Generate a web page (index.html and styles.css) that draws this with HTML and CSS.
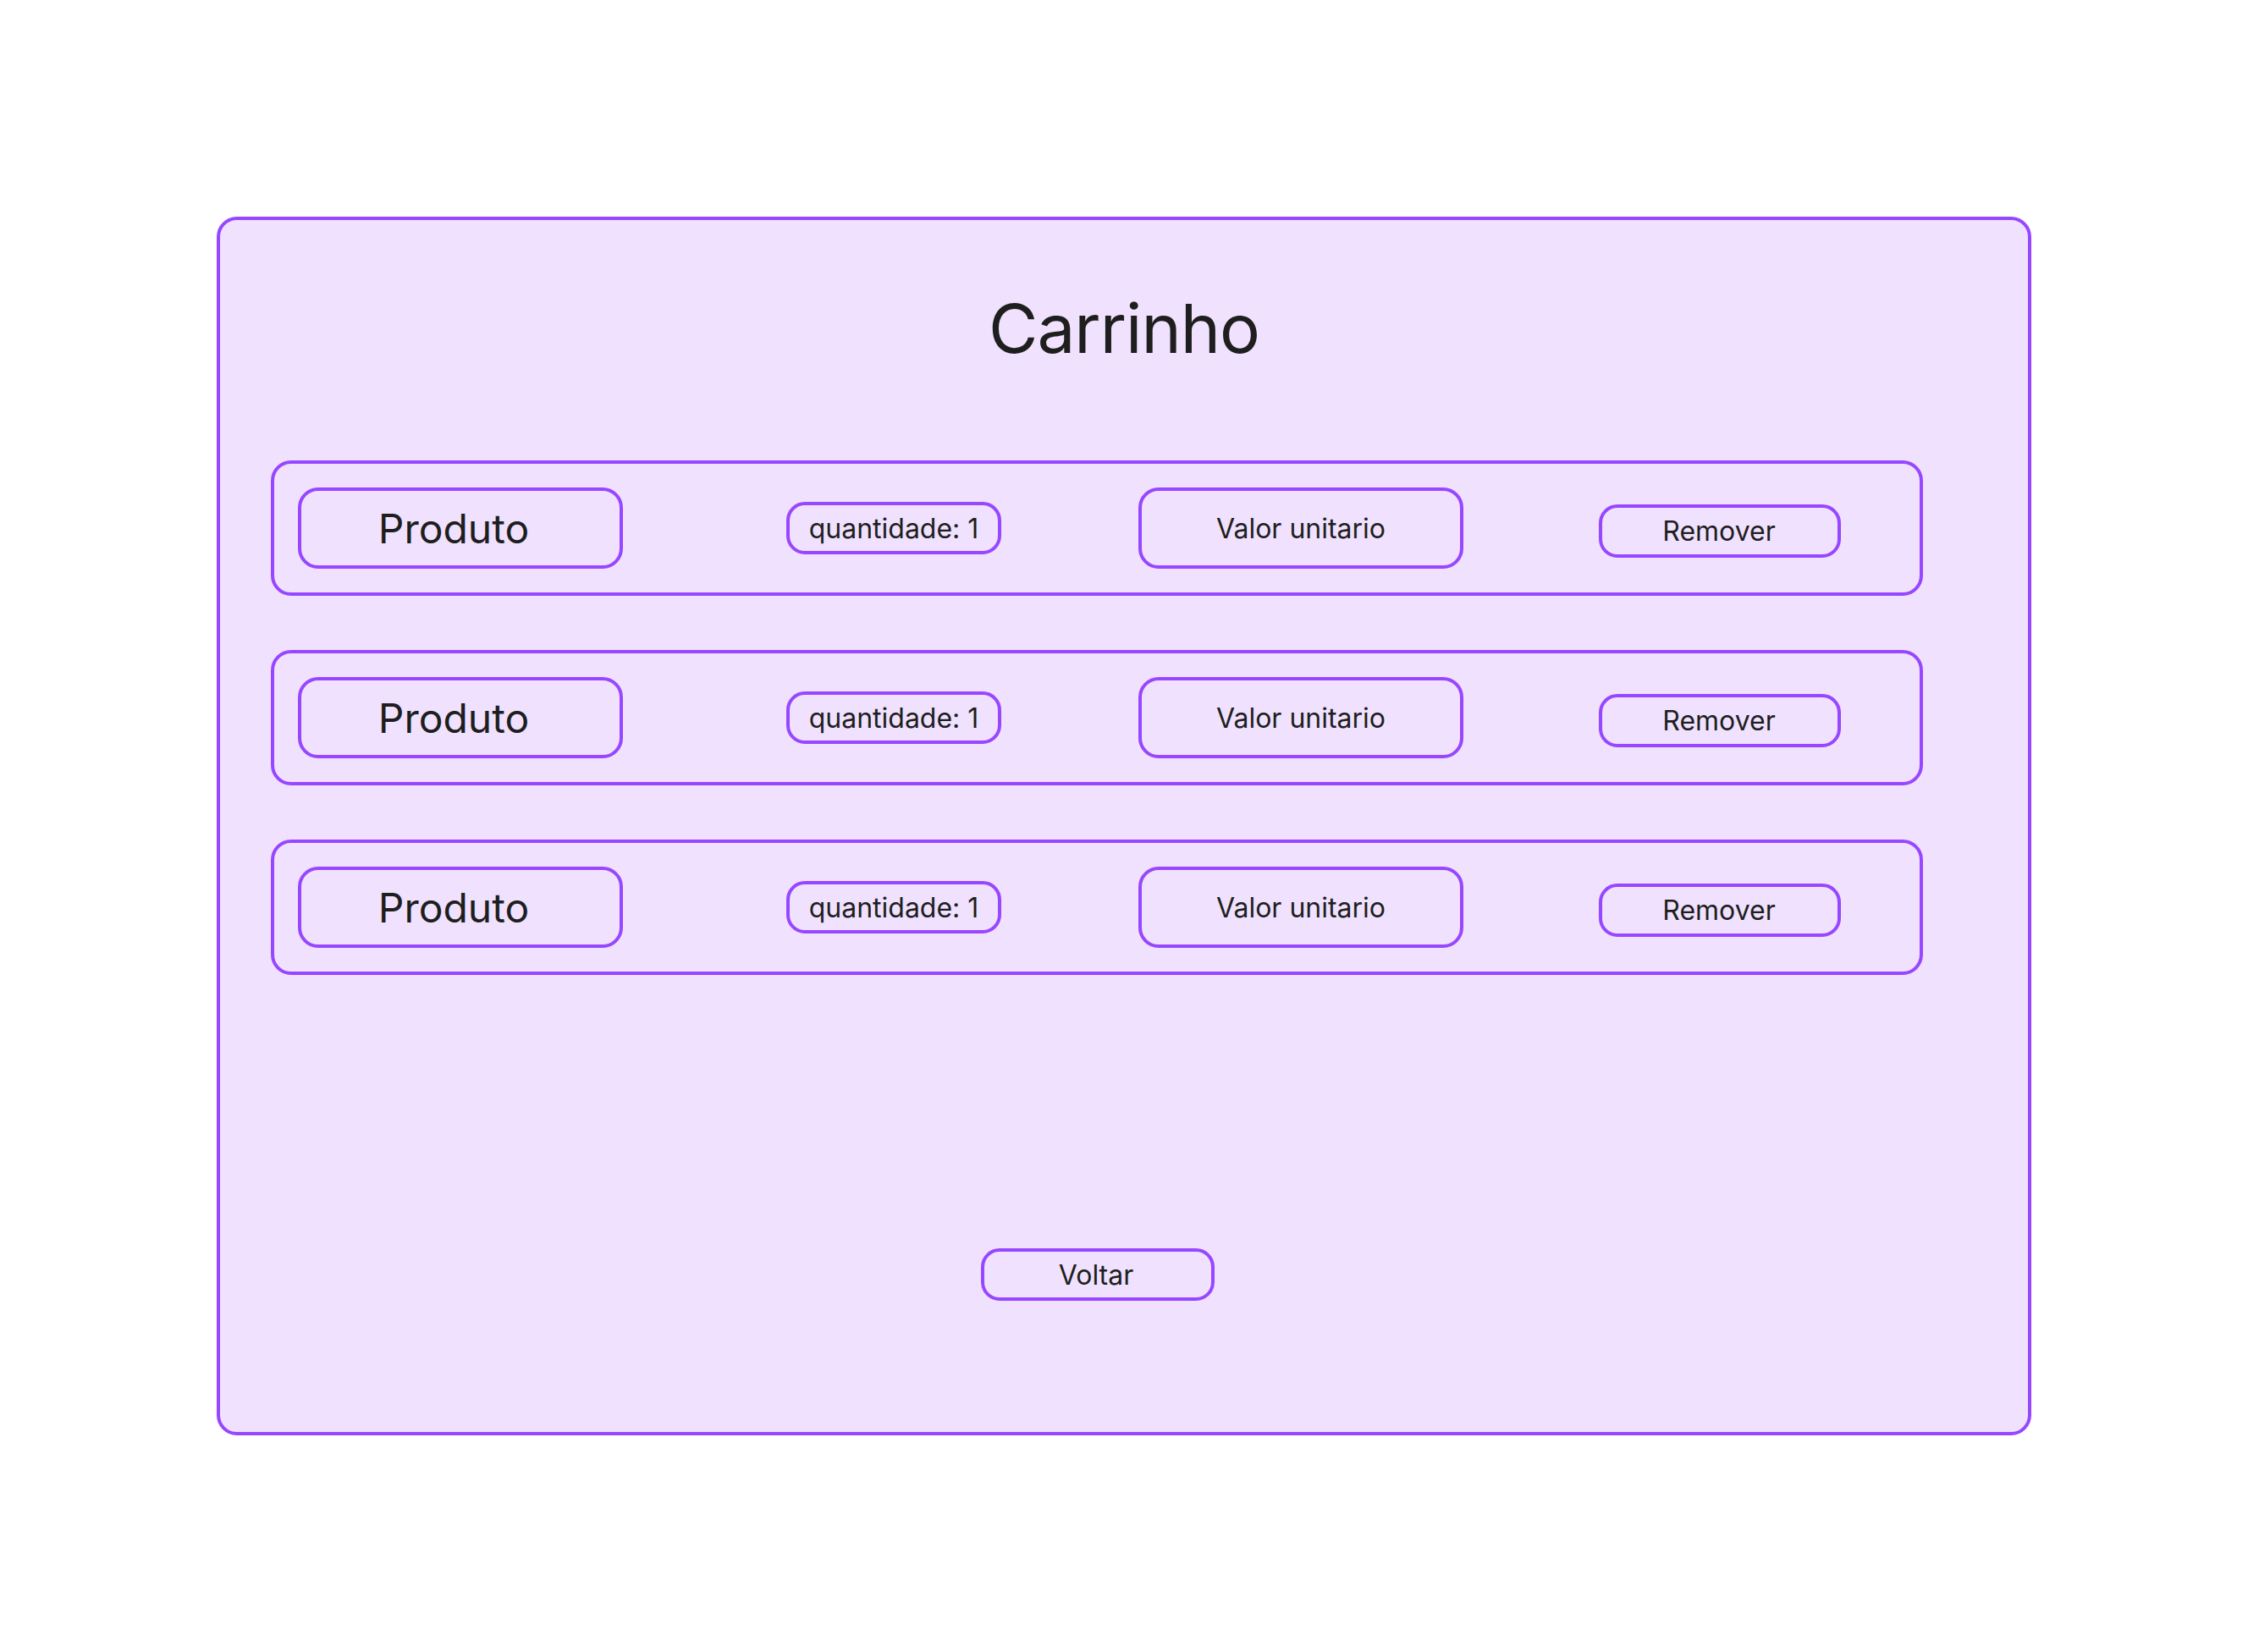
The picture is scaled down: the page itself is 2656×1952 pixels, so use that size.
FILE: index.html
```html
<!DOCTYPE html>
<html lang="pt">
<head>
<meta charset="utf-8">
<title>Carrinho</title>
<link rel="stylesheet" href="styles.css">
</head>
<body>
<main class="cart">
  <h1 class="cart-title">Carrinho</h1>
  <section class="cart-list">
    <div class="cart-row">
      <div class="box box-product">Produto</div>
      <div class="pill pill-qty">quantidade: 1</div>
      <div class="box box-price">Valor unitario</div>
      <button class="pill pill-remove">Remover</button>
    </div>
    <div class="cart-row">
      <div class="box box-product">Produto</div>
      <div class="pill pill-qty">quantidade: 1</div>
      <div class="box box-price">Valor unitario</div>
      <button class="pill pill-remove">Remover</button>
    </div>
    <div class="cart-row">
      <div class="box box-product">Produto</div>
      <div class="pill pill-qty">quantidade: 1</div>
      <div class="box box-price">Valor unitario</div>
      <button class="pill pill-remove">Remover</button>
    </div>
  </section>
  <div class="cart-footer">
    <button class="pill pill-back">Voltar</button>
  </div>
</main>
</body>
</html>
```

FILE: styles.css
```css
html, body {
  margin: 0;
  padding: 0;
  background: #ffffff;
}

body {
  font-family: "Inter", "Noto Sans", sans-serif;
  color: #1e1e1e;
}

.cart {
  box-sizing: border-box;
  width: 2144px;
  height: 1440px;
  margin: 256px 0 0 256px;
  padding-top: 78px;
  background: #f0e1fe;
  border: 4px solid #9747ff;
  border-radius: 24px;
}

.cart-title {
  margin: 0;
  font-size: 80px;
  font-weight: 400;
  letter-spacing: -1px;
  line-height: 100px;
  text-align: center;
}

.cart-list {
  display: flex;
  flex-direction: column;
  gap: 64px;
  margin-top: 106px;
  padding-left: 60px;
}

.cart-row {
  box-sizing: border-box;
  display: flex;
  align-items: center;
  width: 1952px;
  height: 160px;
  padding: 0 28px;
  border: 4px solid #9747ff;
  border-radius: 24px;
}

.box,
.pill {
  box-sizing: border-box;
  display: flex;
  align-items: center;
  justify-content: center;
  border: 4px solid #9747ff;
  background: transparent;
  color: #1e1e1e;
  font-family: "Inter", "Noto Sans", sans-serif;
  white-space: nowrap;
  padding: 0;
  margin: 0;
}

.box {
  width: 384px;
  height: 96px;
  border-radius: 24px;
  font-size: 32px;
}

.box-product {
  font-size: 48px;
  padding-right: 16px;
}

.pill {
  height: 62px;
  border-radius: 22px;
  font-size: 32px;
}

.pill-qty {
  width: 254px;
  margin-left: 193px;
}

.box-price {
  margin-left: 162px;
}

.pill-remove {
  width: 286px;
  height: 63px;
  margin-left: 160px;
  margin-top: 7px;
  padding-right: 2px;
}

.cart-footer {
  display: flex;
  justify-content: center;
  padding-right: 62px;
  margin-top: 323px;
}

.pill-back {
  width: 276px;
  padding-right: 4px;
}
```
